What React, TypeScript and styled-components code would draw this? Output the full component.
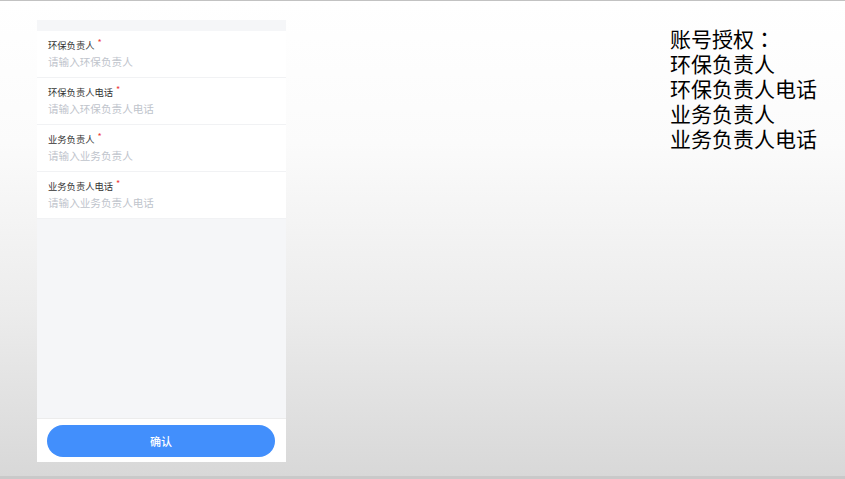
import React from 'react';
import styled, { createGlobalStyle } from 'styled-components';

const GlobalStyle = createGlobalStyle`
  html, body {
    margin: 0;
    padding: 0;
    height: 100%;
    overflow: hidden;
  }
  body {
    font-family: 'Noto Sans CJK SC', 'Noto Sans', sans-serif;
  }
`;

const Page = styled.div`
  box-sizing: border-box;
  height: 479px;
  display: flex;
  align-items: flex-start;
  padding: 19px 28px 0 37px;
  border-top: 1px solid #c2c2c2;
  border-bottom: 3px solid #c9c9c9;
  background: linear-gradient(to bottom, #ffffff 0%, #fbfbfb 30%, #ececec 65%, #d8d8d8 100%);
`;

const Panel = styled.div`
  width: 249px;
  height: 442px;
  display: flex;
  flex-direction: column;
  background: #f5f6f8;
  padding-top: 11px;
  box-sizing: border-box;
`;

const FieldList = styled.div`
  flex: 1;
  display: flex;
  flex-direction: column;
`;

const Field = styled.div`
  background: #ffffff;
  height: 47px;
  box-sizing: border-box;
  padding: 7px 11px 0;
  border-bottom: 1px solid #f1f2f4;
`;

const Label = styled.div`
  font-size: 9.3px;
  line-height: 14px;
  color: #333333;
  display: flex;
  align-items: flex-start;
  gap: 3px;
`;

const Star = styled.span`
  color: #ee3b3b;
  font-size: 9px;
  line-height: 10px;
`;

const Placeholder = styled.div`
  font-size: 10.6px;
  line-height: 19px;
  color: #c0c4cc;
`;

const Footer = styled.div`
  background: #ffffff;
  height: 44px;
  border-top: 1px solid #ececec;
  box-sizing: border-box;
  display: flex;
  align-items: center;
  padding: 0 11px 0 10px;
`;

const ConfirmButton = styled.button`
  width: 100%;
  height: 32px;
  border: none;
  border-radius: 16px;
  background: #428ffc;
  color: #ffffff;
  font-family: 'Noto Sans CJK SC', sans-serif;
  font-size: 11px;
  font-weight: 500;
  margin-top: 1px;
`;

const Note = styled.div`
  margin-left: auto;
  margin-top: 6px;
  font-size: 21px;
  line-height: 25px;
  color: #000000;
  font-family: 'Noto Sans CJK SC', sans-serif;
  white-space: nowrap;
`;

const NoteLine = styled.div`
  height: 25px;
`;

// centred full-width colon, as in the reference
const Colon = styled.span`
  font-family: 'Noto Sans CJK TC', sans-serif;
`;

const fields = [
  { label: '环保负责人', placeholder: '请输入环保负责人' },
  { label: '环保负责人电话', placeholder: '请输入环保负责人电话' },
  { label: '业务负责人', placeholder: '请输入业务负责人' },
  { label: '业务负责人电话', placeholder: '请输入业务负责人电话' },
];

const App: React.FC = () => (
  <>
    <GlobalStyle />
    <Page>
      <Panel>
        <FieldList>
          {fields.map(f => (
            <Field key={f.label}>
              <Label>
                {f.label}
                <Star>*</Star>
              </Label>
              <Placeholder>{f.placeholder}</Placeholder>
            </Field>
          ))}
        </FieldList>
        <Footer>
          <ConfirmButton>确认</ConfirmButton>
        </Footer>
      </Panel>
      <Note>
        <NoteLine>
          账号授权<Colon>：</Colon>
        </NoteLine>
        {fields.map(f => (
          <NoteLine key={f.label}>{f.label}</NoteLine>
        ))}
      </Note>
    </Page>
  </>
);

export default App;
